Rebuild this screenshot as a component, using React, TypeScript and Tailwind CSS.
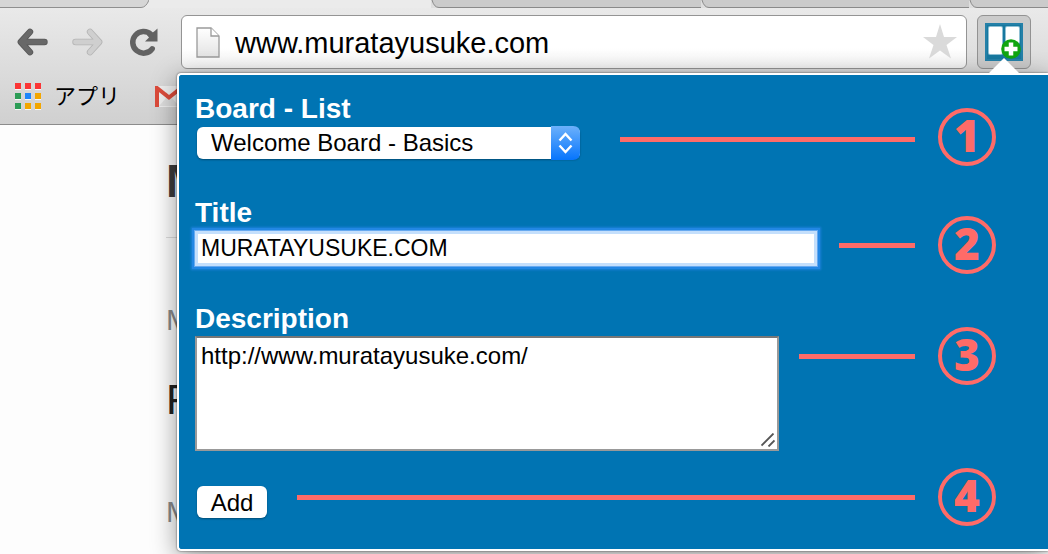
import type { ReactNode } from "react";

function TabStrip() {
  return (
    <div className="flex h-2 w-full bg-[#ebebeb]">
      <svg className="h-2 w-[149px] shrink-0" viewBox="0 0 149 8" aria-hidden="true">
        <path d="M0 0H149Q146 7.500 141 7.500H0Z" fill="#d6d6d6" />
        <path d="M149 0Q146 7.500 141 7.500H0" fill="none" stroke="#8f8f8f" />
      </svg>
      <div className="w-[282px] shrink-0" />
      <TabEdge className="w-[270px] shrink-0" />
      <TabEdge className="w-[268px] shrink-0" />
      <TabEdge className="min-w-0 flex-1" />
    </div>
  );
}

function TabEdge({ className }: { className: string }) {
  return (
    <div className={`flex h-2 overflow-hidden bg-[#cbcbcb] ${className}`}>
      <svg className="h-2 w-2 shrink-0" viewBox="0 0 8 8" aria-hidden="true">
        <path d="M0 0H1Q3 7.500 8 7.500V8H0Z" fill="#dedede" />
        <path d="M1 0Q3 7.500 8 7.500" fill="none" stroke="#8a8a8a" />
      </svg>
      <div className="h-2 flex-1 border-b border-[#8a8a8a]" />
    </div>
  );
}

function ArrowIcon({ color, edge }: { color: string; edge: string }) {
  return (
    <svg className="h-8 w-8" viewBox="0 0 32 32" fill="none" strokeWidth="6.400" strokeLinecap="round" strokeLinejoin="round" aria-hidden="true">
      <path d="M14 5.800L4.800 16L14 26.200M5.500 16H28.500" stroke={edge} />
      <path d="M14 5.800L4.800 16L14 26.200M5.500 16H28.500" stroke={color} strokeWidth="4.800" />
    </svg>
  );
}

function ReloadIcon() {
  return (
    <svg className="h-8 w-8" viewBox="0 0 32 32" aria-hidden="true">
      <path d="M24.200 22.800A10.800 10.800 0 1 1 23 8.500" fill="none" stroke="#626262" strokeWidth="5.500" strokeLinecap="round" />
      <path d="M29.500 2.500V15.500H17L21 11.500L19 9Q24 8 29.500 2.500Z" fill="#626262" />
    </svg>
  );
}

function PageIcon() {
  return (
    <svg className="h-[31px] w-6 shrink-0" viewBox="0 0 24 31" aria-hidden="true">
      <defs>
        <linearGradient id="sheet" x2="0" y2="1">
          <stop stopColor="#fff" />
          <stop offset="1" stopColor="#e3e3e3" />
        </linearGradient>
      </defs>
      <path d="M1 1H15L23 9V30H1Z" fill="url(#sheet)" stroke="#9a9a9a" strokeWidth="1.300" />
      <path d="M15 1V9H23" fill="#fff" stroke="#9a9a9a" strokeWidth="1.300" />
    </svg>
  );
}

function BoardIcon() {
  return (
    <svg className="h-[38px] w-[38px]" viewBox="0 0 38 38" aria-hidden="true">
      <rect width="38" height="38" fill="#17789f" />
      <rect x="1" y="1" width="36" height="36" fill="none" stroke="#2480a8" strokeWidth="2" />
      <rect x="3" y="3" width="15" height="29" rx="2" fill="#8fc0d4" />
      <rect x="20" y="3" width="15" height="18" rx="2" fill="#8fc0d4" />
      <rect x="4" y="4" width="13" height="27" rx="1" fill="#fff" />
      <rect x="21" y="4" width="13" height="16" rx="1" fill="#fff" />
      <circle cx="26" cy="26" r="9.800" fill="#10a510" />
      <path d="M26 19.500V32.500M19.500 26H32.500" stroke="#fff" strokeWidth="4.500" />
    </svg>
  );
}

const appColors = [
  "#fb3535", "#fb3535", "#fb3535",
  "#2c9c56", "#1e86fb", "#f3a600",
  "#2c9c56", "#f3a600", "#f3a600",
];

function AppsIcon() {
  return (
    <svg className="h-[27px] w-[26px]" viewBox="0 0 26 27" aria-hidden="true">
      {appColors.map((color, i) => (
        <g key={i} transform={`translate(${(i % 3) * 10} ${Math.floor(i / 3) * 10})`}>
          <rect y="1" width="6" height="6" fill="#f6f6f6" />
          <rect width="6" height="6" fill={color} />
        </g>
      ))}
    </svg>
  );
}

function MailIcon() {
  return (
    <svg className="h-[21px] w-7" viewBox="0 0 28 21" aria-hidden="true">
      <rect width="28" height="21" fill="#efefef" />
      <path d="M4 20L11 12L14 14L17 12L24 20Z" fill="#dedede" />
      <path d="M2 21V2L14 11.500L26 2V21" fill="none" stroke="#dc4b3b" strokeWidth="4" />
    </svg>
  );
}

function Row({
  children, className, calloutClass, lineClass, number,
}: {
  children: ReactNode; className: string; calloutClass: string; lineClass: string; number: number;
}) {
  return (
    <div className={`flex items-start ${className}`}>
      {children}
      <div className={`flex min-w-0 flex-1 items-center gap-[23px] ${calloutClass}`}>
        <div className={`h-[5px] flex-1 bg-[#ff6b68] ${lineClass}`} />
        <div className="flex h-[58px] w-[58px] shrink-0 items-center justify-center rounded-full border-4 border-[#ff6b68] pb-1 font-['Noto_Sans','Open_Sans',sans-serif] text-[44px] leading-[46px] font-black text-[#ff6b68]">
          {number}
        </div>
      </div>
    </div>
  );
}

const labelClass = "block text-[28px] leading-[30px] font-bold text-white";

function Popup() {
  return (
    <section className="absolute top-[73px] right-0 left-[177px] rounded-l-sm border-2 border-r-0 border-white bg-[#0074b3] shadow-[0_6px_26px_rgba(0,0,0,0.42),0_0_2px_rgba(0,0,0,0.7)]">
      <svg className="absolute -top-[17px] right-7 h-4 w-8" viewBox="0 0 32 16" aria-hidden="true">
        <path d="M0 16L16 0L32 16Z" fill="#fff" />
      </svg>
      <form className="pt-[19px] pr-[52px] pl-4" onSubmit={(e) => e.preventDefault()}>
        <Row className="h-[104px]" calloutClass="pt-[14px]" lineClass="ml-10 mt-1" number={1}>
          <div className="w-[385px]">
            <label htmlFor="list" className={labelClass}>Board - List</label>
            <div className="relative mt-[3px] ml-0.5 h-8">
              <select id="list" className="h-8 w-full appearance-none rounded-md bg-white pl-3.5 text-2xl leading-8 text-black shadow-[0_1px_2px_rgba(0,0,0,0.35)] outline-none">
                <option>Welcome Board - Basics</option>
              </select>
              <svg className="pointer-events-none absolute -top-px right-0 h-[34px] w-[29px]" viewBox="0 0 29 34" aria-hidden="true">
                <defs>
                  <linearGradient id="stepper" x2="0" y2="1">
                    <stop stopColor="#6cb1fb" />
                    <stop offset="1" stopColor="#0675fd" />
                  </linearGradient>
                </defs>
                <path d="M0 0H22Q29 0 29 7V27Q29 34 22 34H0Z" fill="url(#stepper)" />
                <path d="M8.500 14.500L14.500 8L20.500 14.500M8.500 19.500L14.500 26L20.500 19.500" fill="none" stroke="#fff" strokeWidth="2.400" />
              </svg>
            </div>
          </div>
        </Row>
        <Row className="h-[106px]" calloutClass="pt-[18px]" lineClass="ml-[22px]" number={2}>
          <div className="w-[622px]">
            <label htmlFor="title" className={labelClass}>Title</label>
            <input
              id="title"
              defaultValue="MURATAYUSUKE.COM"
              className="mt-[3px] block h-[35px] w-full border-3 border-[#c4dffc] bg-white px-[3px] text-[23px] text-black shadow-[0_0_0_1px_#66a9f0,0_0_0_3px_#2287e4,0_0_2px_4px_#1b80d8] outline-none"
            />
          </div>
        </Row>
        <Row className="h-[164px]" calloutClass="pt-[23px]" lineClass="ml-5" number={3}>
          <div className="w-[584px]">
            <label htmlFor="description" className={labelClass}>Description</label>
            <div className="relative mt-0.5">
              <textarea
                id="description"
                defaultValue="http://www.muratayusuke.com/"
                className="block h-[115px] w-full resize-none border-2 border-[#999] border-t-[#777] bg-white px-1 py-1 text-2xl leading-7 text-black outline-none"
              />
              <svg className="pointer-events-none absolute right-1 bottom-1 h-3.5 w-3.5" viewBox="0 0 14 14" stroke="#555" strokeWidth="1.800" aria-hidden="true">
                <path d="M0.500 12.500L12.500 0.500M7.500 13.500L13.500 7.500" />
              </svg>
            </div>
          </div>
        </Row>
        <Row className="h-[81px]" calloutClass="" lineClass="ml-[30px]" number={4}>
          <button type="submit" className="mt-[18px] ml-0.5 h-8 w-[70px] rounded-md bg-white pt-0.5 text-2xl leading-[30px] text-black shadow-[0_1px_2px_rgba(0,0,0,0.35)]">
            Add
          </button>
        </Row>
      </form>
    </section>
  );
}

export default function App() {
  return (
    <div className="relative min-h-screen overflow-hidden bg-[#fdfdfd] font-['Liberation_Sans','Noto_Sans_CJK_JP',sans-serif]">
      <header className="border-b border-[#8c8c8c] bg-linear-to-b from-[#ebebeb] to-[#d0d0d0]">
        <TabStrip />
        <div className="flex items-center pt-[7px] pr-[17px] pl-4">
          <button type="button" aria-label="Back"><ArrowIcon color="#686868" edge="#585858" /></button>
          <button type="button" aria-label="Forward" className="ml-6 rotate-180"><ArrowIcon color="#cfcfcf" edge="#b5b5b5" /></button>
          <button type="button" aria-label="Reload" className="ml-6"><ReloadIcon /></button>
          <div className="ml-[21px] flex h-[54px] flex-1 items-center rounded-md border border-[#949494] bg-linear-to-b from-white from-60% to-[#f4f4f4] pr-2 pl-3.5">
            <PageIcon />
            <input aria-label="Address" defaultValue="www.muratayusuke.com" className="ml-[15px] min-w-0 flex-1 bg-transparent pt-1 text-[29px] text-black outline-none" />
            <button type="button" aria-label="Bookmark this page">
              <svg className="h-9 w-9" viewBox="0 0 36 36" aria-hidden="true">
                <path d="M18 0L22 13H35L24.500 21L29 34.500L18 26.500L7 34.500L11.500 21L1 13H14Z" fill="#dadada" />
              </svg>
            </button>
          </div>
          <button type="button" aria-label="Add card" className="ml-2.5 flex h-[54px] w-[54px] items-center justify-center rounded-md border border-[#929292] bg-[#cbcbcb]">
            <BoardIcon />
          </button>
        </div>
        <nav className="flex h-[55px] items-center pl-[15px]">
          <a href="#apps" className="flex items-center gap-[13px] text-[22px] leading-8 text-black"><AppsIcon />アプリ</a>
          <a href="#mail" aria-label="Gmail" className="ml-[35px]"><MailIcon /></a>
        </nav>
      </header>
      <main className="pl-[166px]">
        <h1 className="border-b border-[#ddd] pt-[30px] pb-[30px] text-[46px] leading-[52px] font-bold text-[#3c3c3c]">M</h1>
        <p className="pt-16 text-[30px] leading-9 text-[#8a8a8a]">M</p>
        <h2 className="pt-[38px] text-[42px] leading-[48px] text-[#222]">P</h2>
        <p className="pt-[70px] text-[30px] leading-9 text-[#8a8a8a]">M</p>
      </main>
      <Popup />
    </div>
  );
}
